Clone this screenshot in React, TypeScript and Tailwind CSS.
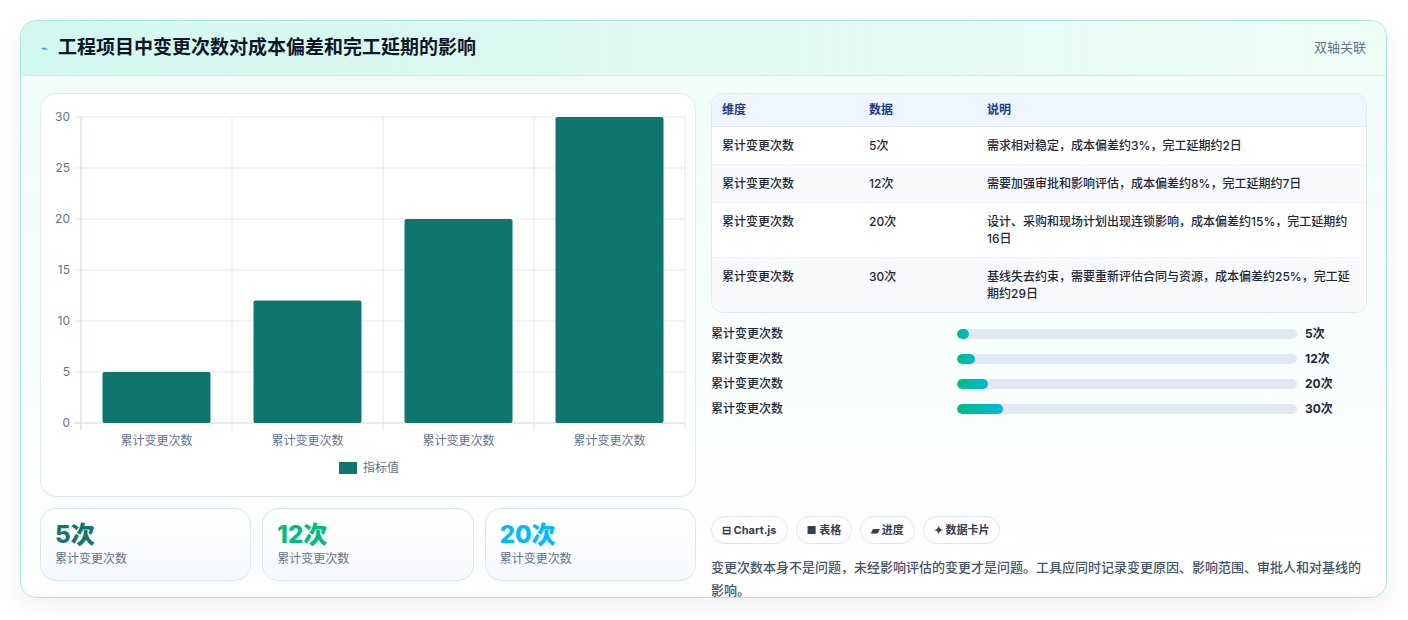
import React from "react";

const font = { fontFamily: '"Inter", "Noto Sans CJK SC", sans-serif' };

const rows = [
  { v: "5次", d: "需求相对稳定，成本偏差约3%，完工延期约2日" },
  { v: "12次", d: "需要加强审批和影响评估，成本偏差约8%，完工延期约7日" },
  { v: "20次", d: "设计、采购和现场计划出现连锁影响，成本偏差约15%，完工延期约16日" },
  { v: "30次", d: "基线失去约束，需要重新评估合同与资源，成本偏差约25%，完工延期约29日" },
];

const bars = [
  { v: "5次", w: 12 },
  { v: "12次", w: 18 },
  { v: "20次", w: 31 },
  { v: "30次", w: 46 },
];

function Chart() {
  const vals = [5, 12, 20, 30];
  const y = (v: number) => 23 + (30 - v) * 10.2;
  return (
    <svg width="656" height="403" className="block">
      {[0, 5, 10, 15, 20, 25, 30].map((t) => (
        <g key={t}>
          <line x1={34} x2={644} y1={y(t)} y2={y(t)} stroke={t === 0 ? "#cbd5e1" : "#e5e7eb"} />
          <text x={29} y={y(t) + 4} textAnchor="end" fontSize="12" fill="#64748b">{t}</text>
        </g>
      ))}
      {[0, 1, 2, 3, 4].map((i) => (
        <line key={i} x1={40 + 151 * i} x2={40 + 151 * i} y1={23} y2={336} stroke={i === 0 ? "#cbd5e1" : "#e5e7eb"} />
      ))}
      {vals.map((v, i) => (
        <g key={i}>
          <rect x={40 + 151 * i + 21.5} y={y(v)} width={108} height={v * 10.2} rx={2} fill="#0f766e" />
          <text x={40 + 151 * i + 75.5} y={351} textAnchor="middle" fontSize="12" fill="#64748b">累计变更次数</text>
        </g>
      ))}
      <rect x={298} y={368} width={18} height={12} fill="#0f766e" />
      <text x={322} y={378} fontSize="12" fill="#64748b">指标值</text>
    </svg>
  );
}

export default function App() {
  return (
    <div style={font} className="w-[1408px] h-[620px] bg-white pt-5 px-5">
      <div className="w-[1367px] h-[578px] rounded-2xl border border-[#a7e8df] bg-gradient-to-b from-[#effdf8] to-white shadow-[0_8px_24px_rgba(0,0,0,0.06)] overflow-hidden">
        <div className="h-[55px] flex items-center justify-between px-5 bg-gradient-to-r from-[#d2f7ee] to-[#edfdf6] border-b border-[#cdeee6]">
          <div className="flex items-center gap-2.5">
            <span className="text-[11px] text-blue-500">⌁</span>
            <span className="text-[19px] font-bold text-[#0f172a]">工程项目中变更次数对成本偏差和完工延期的影响</span>
          </div>
          <span className="text-[13px] text-slate-500">双轴关联</span>
        </div>
        <div className="flex gap-[15px] px-[19px] pt-[17px]">
          <div className="w-[656px] flex flex-col gap-[11px]">
            <div className="h-[404px] rounded-2xl border border-slate-200 bg-white overflow-hidden"><Chart /></div>
            <div className="grid grid-cols-3 gap-[11px]">
              {[
                ["5次", "text-[#0f766e]"],
                ["12次", "text-emerald-500"],
                ["20次", "text-sky-400"],
              ].map(([n, c]) => (
                <div key={n} className="h-[73px] rounded-2xl border border-[#dbe7f3] bg-gradient-to-b from-white to-[#f6f9fd] px-[14px] pt-[10px]">
                  <div className={`text-[24px] font-extrabold leading-[32px] ${c}`}>{n}</div>
                  <div className="text-[12px] text-slate-500 leading-4">累计变更次数</div>
                </div>
              ))}
            </div>
          </div>
          <div className="w-[657px] flex flex-col">
            <div className="rounded-xl border border-slate-200 overflow-hidden bg-white text-[12px] text-[#1e293b]">
              <div className="flex h-[33px] items-center bg-[#eff6ff] border-b border-slate-200 font-bold text-[#1e3a8a]">
                <div className="w-[157px] pl-[10px]">维度</div>
                <div className="w-[118px]">数据</div>
                <div className="flex-1">说明</div>
              </div>
              {rows.map((r, i) => (
                <div key={i} className={`flex py-[10px] leading-[17px] ${i % 2 ? "bg-[#f8fafc]" : "bg-white"} ${i < 3 ? "border-b border-slate-100" : ""}`}>
                  <div className="w-[157px] pl-[10px] font-medium">累计变更次数</div>
                  <div className="w-[118px] font-medium">{r.v}</div>
                  <div className="flex-1 pr-2 font-medium">{r.d}</div>
                </div>
              ))}
            </div>
            <div className="flex flex-col gap-[7px] mt-[12px]">
              {bars.map((b) => (
                <div key={b.v} className="flex items-center h-[18px] text-[12px] text-[#1e293b] font-medium">
                  <div className="w-[246px]">累计变更次数</div>
                  <div className="w-[340px] h-[10px] rounded-full bg-slate-200 overflow-hidden">
                    <div className="h-full rounded-full bg-gradient-to-r from-emerald-500 to-cyan-500" style={{ width: b.w }} />
                  </div>
                  <div className="ml-2 font-bold">{b.v}</div>
                </div>
              ))}
            </div>
            <div className="flex gap-2 mt-[98px] text-[11px] font-bold text-[#334155]">
              {["⊟ Chart.js", "■ 表格", "▰ 进度", "✦ 数据卡片"].map((c) => (
                <span key={c} className="h-[28px] px-[10px] flex items-center rounded-full border border-slate-200 bg-white">{c}</span>
              ))}
            </div>
            <p className="mt-[12px] text-[13px] leading-[23px] text-[#475569] font-medium">
              变更次数本身不是问题，未经影响评估的变更才是问题。工具应同时记录变更原因、影响范围、审批人和对基线的影响。
            </p>
          </div>
        </div>
      </div>
    </div>
  );
}
